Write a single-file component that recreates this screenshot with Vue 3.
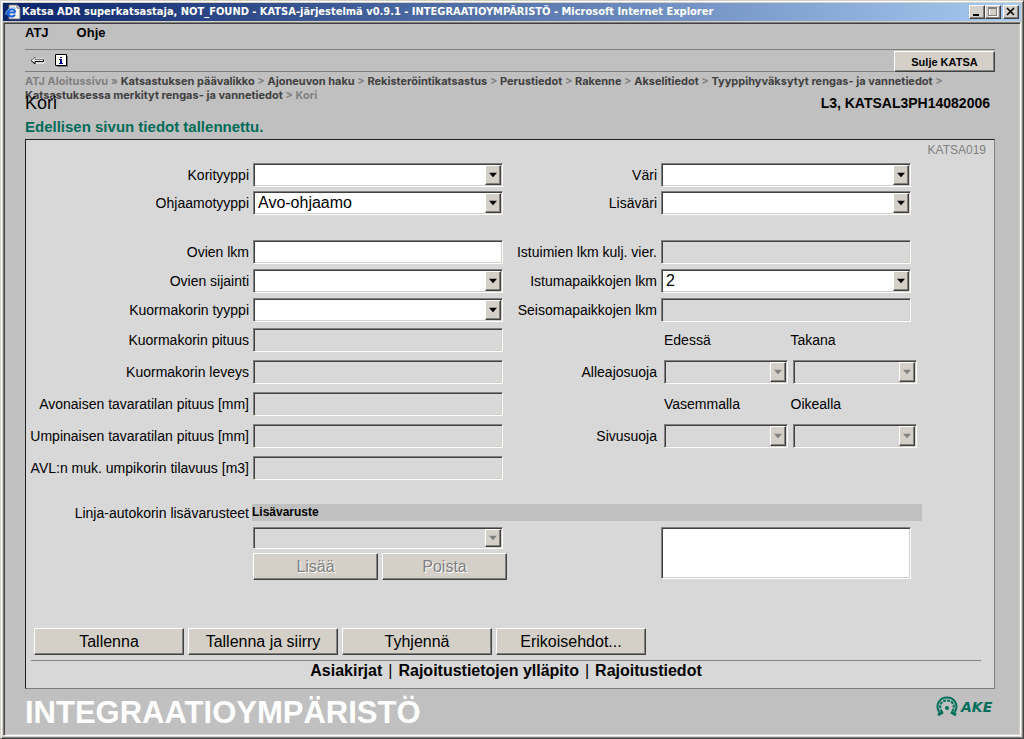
<script setup>
import { reactive } from 'vue'

const trail = [
  'Katsastuksen päävalikko',
  'Ajoneuvon haku',
  'Rekisteröintikatsastus',
  'Perustiedot',
  'Rakenne',
  'Akselitiedot',
  'Tyyppihyväksytyt rengas- ja vannetiedot',
  'Katsastuksessa merkityt rengas- ja vannetiedot',
]

const sel = (id, label, value = '') => ({ id, label, kind: 'select', value })
const txt = (id, label, disabled = true) => ({ id, label, kind: 'text', value: '', disabled })
const heads = (...names) => ({ kind: 'heads', names })
const pair = (id, label, parts) => ({ id, label, kind: 'pair', parts })

const rows = reactive([
  { size: 'tight', cells: [sel('korityyppi', 'Korityyppi'), sel('vari', 'Väri')] },
  { size: 'tight last', cells: [sel('ohjaamo', 'Ohjaamotyyppi', 'Avo-ohjaamo'), sel('lisavari', 'Lisäväri')] },
  { size: 'mid', cells: [txt('ovet', 'Ovien lkm', false), txt('istuimet', 'Istuimien lkm kulj. vier.')] },
  { size: 'mid', cells: [sel('sijainti', 'Ovien sijainti'), sel('istumapaikat', 'Istumapaikkojen lkm', '2')] },
  { size: 'mid', cells: [sel('kuormatyyppi', 'Kuormakorin tyyppi'), txt('seisomapaikat', 'Seisomapaikkojen lkm')] },
  { size: 'loose', cells: [txt('pituus', 'Kuormakorin pituus'), heads('Edessä', 'Takana')] },
  { size: 'loose', cells: [txt('leveys', 'Kuormakorin leveys'), pair('alleajo', 'Alleajosuoja', ['Edessä', 'Takana'])] },
  { size: 'loose', cells: [txt('avonainen', 'Avonaisen tavaratilan pituus [mm]'), heads('Vasemmalla', 'Oikealla')] },
  { size: 'loose', cells: [txt('umpinainen', 'Umpinaisen tavaratilan pituus [mm]'), pair('sivu', 'Sivusuoja', ['Vasemmalla', 'Oikealla'])] },
  { size: 'loose', cells: [txt('tilavuus', 'AVL:n muk. umpikorin tilavuus [m3]')] },
])

const actions = ['Tallenna', 'Tallenna ja siirry', 'Tyhjennä', 'Erikoisehdot...']
</script>

<template>
  <div class="window">
    <header class="titlebar">
      <svg class="ie" viewBox="0 0 16 16" aria-hidden="true">
        <path d="M4 1h8l3 3v11H4z" fill="#f4f4ec" stroke="#777" />
        <path d="M12 1v3h3" fill="#fff" stroke="#777" />
        <path d="M10.500 8.500H3.500M10 10.500C8 14 2.500 12.500 3 8.500S9.500 4 10.200 8.300" fill="none" stroke="#1b62d8" stroke-width="2" />
        <path d="M1 11C0 6 7 2 11 4.500" fill="none" stroke="#7db7ff" />
      </svg>
      <span class="caption">Katsa ADR superkatsastaja, NOT_FOUND - KATSA-järjestelmä v0.9.1 - INTEGRAATIOYMPÄRISTÖ - Microsoft Internet Explorer</span>
      <div class="controls">
        <button type="button" aria-label="Minimize"><svg viewBox="0 0 12 10"><path d="M2 7h6v2H2z" /></svg></button>
        <button type="button" aria-label="Maximize" disabled><svg viewBox="0 0 12 10"><path d="M2 1h8v8H2z" fill="none" stroke="#fff" transform="translate(.5 .5)" /><path d="M1 0h9v9H1zM2 2v6h7V2z" fill="#808080" fill-rule="evenodd" /></svg></button>
        <button type="button" class="close" aria-label="Close"><svg viewBox="0 0 12 10"><path d="M2 1l7 7M9 1L2 8" stroke="#000" stroke-width="1.600" /></svg></button>
      </div>
    </header>

    <main class="client">
      <nav class="menu">
        <a href="#atj">ATJ</a>
        <a href="#ohje">Ohje</a>
      </nav>
      <div class="toolbar">
        <button type="button" class="tool" aria-label="Takaisin">
          <svg viewBox="0 0 15 10" class="back">
            <path d="M6 2v1h8M6 8V7h8V4" fill="none" stroke="#f5f5f5" />
            <path d="M1 4.500L5 1v2.500h8v2H5V8z" fill="#e8e8e8" />
            <path d="M1 4.500L5 1v2.500h8" fill="none" stroke="#777" />
            <path d="M1 4.500L5 8V5.500h8.500v-2" fill="none" stroke="#000" />
          </svg>
        </button>
        <button type="button" class="tool" aria-label="Info">
          <svg viewBox="0 0 14 14" class="info">
            <path d="M2 2h11v11H2z" fill="#777" />
            <path d="M.5 .5h11v11H.5z" fill="#fff" stroke="#000" />
            <path d="M5 3h2v1H5zM4 5h3v4h1v1H4V9h1V6H4z" fill="#000080" />
          </svg>
        </button>
        <button type="button" class="btn quit">Sulje KATSA</button>
      </div>

      <nav class="crumbs">
        <span class="dim">ATJ Aloitussivu »</span>{{ ' ' }}
        <template v-for="t in trail" :key="t"><a href="#polku">{{ t }}</a><span class="sep"> &gt; </span></template>
        <span class="dim">Kori</span>
      </nav>
      <div class="heading">
        <h1>Kori</h1>
        <strong>L3, KATSAL3PH14082006</strong>
      </div>
      <p class="message">Edellisen sivun tiedot tallennettu.</p>

      <form class="panel" @submit.prevent>
        <div class="code">KATSA019</div>

        <div v-for="(row, i) in rows" :key="i" class="row" :class="row.size">
          <template v-for="(c, j) in row.cells" :key="j">
            <label v-if="c.kind === 'select' || c.kind === 'text'" :for="c.id" class="label">{{ c.label }}</label>
            <span v-else class="label">{{ c.label }}</span>

            <span v-if="c.kind === 'select'" class="combo">
              <select :id="c.id" v-model="c.value"><option>{{ c.value }}</option></select>
              <svg class="arrow" viewBox="0 0 7 4"><path d="M0 0h7L3.500 4z" /></svg>
            </span>
            <input v-else-if="c.kind === 'text'" :id="c.id" v-model="c.value" type="text" class="field" :disabled="c.disabled" />
            <div v-else-if="c.kind === 'heads'" class="heads">
              <span v-for="n in c.names" :key="n">{{ n }}</span>
            </div>
            <div v-else class="pair">
              <span v-for="p in c.parts" :key="p" class="combo off">
                <select disabled :aria-label="c.label + ' ' + p"><option></option></select>
                <svg class="arrow" viewBox="0 0 7 4"><path d="M0 0h7L3.500 4z" /></svg>
              </span>
            </div>
          </template>
        </div>

        <div class="row extras">
          <label for="varuste" class="label">Linja-autokorin lisävarusteet</label>
          <div class="band">Lisävaruste</div>
          <div class="add">
            <span class="combo off">
              <select id="varuste" disabled><option></option></select>
              <svg class="arrow" viewBox="0 0 7 4"><path d="M0 0h7L3.500 4z" /></svg>
            </span>
            <div class="buttons">
              <button type="button" class="btn small" disabled>Lisää</button>
              <button type="button" class="btn small" disabled>Poista</button>
            </div>
          </div>
          <textarea class="field list" aria-label="Valitut lisävarusteet"></textarea>
        </div>

        <div class="buttons actions">
          <button v-for="a in actions" :key="a" type="button" class="btn">{{ a }}</button>
        </div>
        <nav class="links">
          <a href="#asiakirjat">Asiakirjat</a><span>|</span>
          <a href="#yllapito">Rajoitustietojen ylläpito</a><span>|</span>
          <a href="#rajoitustiedot">Rajoitustiedot</a>
        </nav>
      </form>

      <footer class="footer">
        <span class="env">INTEGRAATIOYMPÄRISTÖ</span>
        <svg class="logo" viewBox="0 0 60 24" aria-label="AKE">
          <path d="M5 18.500C-1 10 5 2.500 12 2.500S25 10 19 18.500" fill="none" stroke="#00705c" stroke-width="2" />
          <path d="M7 17C2.500 10 7 5.500 12 5.500S21.500 10 17 17" fill="none" stroke="#00705c" stroke-width="2" stroke-dasharray="3 1" />
          <path d="M3 20l5-3M21 20l-5-3" stroke="#00705c" stroke-width="3" />
          <circle cx="12" cy="13" r="2" fill="#00705c" />
          <text x="26" y="17" class="logo-text">AKE</text>
        </svg>
      </footer>
    </main>
  </div>
</template>

<style>
body {
  margin: 0;
  background: #d4d0c8;
}
</style>

<style scoped>
* {
  box-sizing: border-box;
}

.window {
  display: flex;
  flex-direction: column;
  min-height: 100vh;
  padding: 2px;
  border: 1px solid;
  border-color: #d4d0c8 #404040 #404040 #d4d0c8;
  background: #d4d0c8;
  box-shadow: inset 1px 1px #fff, inset -1px -1px #808080;
  font-family: "Liberation Sans", Arial, sans-serif;
  font-size: 14px;
  color: #000;
}

a {
  color: inherit;
  text-decoration: none;
}

.titlebar {
  display: flex;
  align-items: center;
  height: 18px;
  margin-bottom: 1px;
  padding: 0 2px;
  background: linear-gradient(90deg, #0a246a, #a6caf0);
}

.ie {
  width: 16px;
  height: 16px;
  margin-right: 1px;
}

.caption {
  flex: 1;
  overflow: hidden;
  color: #fff;
  font: bold 11px/16px "DejaVu Sans Condensed", "DejaVu Sans", sans-serif;
  white-space: nowrap;
}

.controls {
  display: flex;
}

.controls button {
  width: 16px;
  height: 14px;
  padding: 0;
  border: 1px solid;
  border-color: #fff #404040 #404040 #fff;
  background: #d4d0c8;
  box-shadow: inset -1px -1px #808080;
}

.controls svg {
  display: block;
  width: 12px;
  height: 10px;
  margin: 1px;
}

.controls .close {
  margin-left: 2px;
}

.client {
  flex: 1;
  padding: 2px 25px 0 21px;
  border: 1px solid;
  border-color: #808080 #fff #fff #808080;
  background: #c0c0c0;
  box-shadow: inset 1px 1px #404040, inset -1px -1px #d4d0c8;
}

.menu {
  display: flex;
  gap: 28px;
  height: 24px;
  font-weight: bold;
  font-size: 13px;
  line-height: 16px;
}

.toolbar {
  display: flex;
  align-items: center;
  gap: 10px;
  height: 23px;
  padding-left: 5px;
  border: 1px solid #808080;
  border-width: 1px 0;
}

.tool {
  padding: 0;
  border: 0;
  background: none;
}

.tool svg {
  display: block;
}

.back {
  width: 15px;
  height: 10px;
}

.info {
  width: 14px;
  height: 14px;
}

.btn {
  height: 27px;
  padding: 0;
  border: 1px solid;
  border-color: #fff #404040 #404040 #fff;
  background: #d4d0c8;
  box-shadow: inset -1px -1px #808080;
  color: #000;
  font: 16px/20px "Liberation Sans", Arial, sans-serif;
}

.btn:disabled {
  color: #808080;
  text-shadow: 1px 1px #fff;
}

.quit {
  align-self: flex-end;
  width: 101px;
  height: 21px;
  margin: 0 0 -1px auto;
  font-weight: bold;
  font-size: 11px;
  line-height: 16px;
}

.crumbs {
  padding-top: 2px;
  color: #404040;
  font-family: Inter, "Liberation Sans", sans-serif;
  font-weight: bold;
  font-size: 11px;
  line-height: 14px;
}

.dim,
.sep {
  color: #808080;
}

.heading {
  display: flex;
  justify-content: space-between;
  align-items: center;
  margin-top: -9px;
  padding-right: 5px;
  line-height: 20px;
}

h1 {
  margin: 0;
  font-weight: normal;
  font-size: 18px;
}

.message {
  margin: 5px 0 3px;
  color: #006c59;
  font-weight: bold;
  font-size: 15px;
  line-height: 18px;
}

.panel {
  border: 1px solid #808080;
  border-color: #202020 #808080 #808080 #202020;
  background: #d8d8d8;
}

.code {
  height: 21px;
  padding: 2px 8px 0;
  color: #808080;
  font-size: 12px;
  line-height: 16px;
  text-align: right;
}

.row {
  display: grid;
  grid-template-columns: 223px 1fr 150px 1fr;
  align-items: start;
  column-gap: 4px;
  padding: 2px 83px 0 0;
}

.tight {
  height: 28px;
}

.last {
  margin-bottom: 21px;
}

.mid {
  height: 29px;
}

.loose {
  height: 32px;
  padding-top: 3px;
}

.label,
.heads {
  line-height: 24px;
  text-align: right;
  white-space: nowrap;
}

.field,
.combo select {
  display: block;
  width: 100%;
  min-width: 0;
  height: 24px;
  margin: 0;
  padding: 0 4px;
  border: 1px solid;
  border-color: #808080 #fff #fff #808080;
  border-radius: 0;
  outline: 0;
  appearance: none;
  background: #fff;
  box-shadow: inset 1px 1px #404040, inset -1px -1px #d4d0c8;
  color: #000;
  font: 16px/20px "Liberation Sans", Arial, sans-serif;
  opacity: 1;
}

.field:disabled,
.off select {
  background: #d8d8d8;
}

.combo {
  position: relative;
  display: block;
  min-width: 0;
}

.arrow {
  position: absolute;
  top: 2px;
  right: 2px;
  width: 16px;
  height: calc(100% - 4px);
  padding: 0 3px;
  border: 1px solid;
  border-color: #fff #404040 #404040 #fff;
  background: #d4d0c8;
  box-shadow: inset -1px -1px #808080;
  pointer-events: none;
}

.off .arrow {
  fill: #808080;
}

.heads,
.pair {
  display: grid;
  grid-template-columns: 1fr 1fr;
  gap: 5px;
  margin: 0 -6px 0 3px;
  text-align: left;
}

.heads {
  gap: 0;
}

.extras {
  row-gap: 5px;
  padding-top: 19px;
}

.extras .label {
  line-height: 18px;
}

.band {
  grid-column: 2 / -1;
  margin: 0 -11px 0 -1px;
  background: #c0c0c0;
  font-weight: bold;
  font-size: 12px;
  line-height: 17px;
}

.add {
  grid-column: 2;
  min-width: 0;
}

.add select {
  height: 22px;
}

.buttons {
  display: flex;
  gap: 4px;
}

.add .buttons {
  margin-top: 4px;
}

.btn.small {
  flex: 0 0 125px;
}

.list {
  grid-column: 4;
  height: 52px;
  resize: none;
}

.actions {
  margin-top: 48px;
  padding-left: 8px;
}

.actions .btn {
  width: 150px;
}

.links {
  display: flex;
  justify-content: center;
  gap: 6px;
  margin: 5px 13px 0 5px;
  border-top: 1px solid #808080;
  padding-bottom: 7px;
  font-weight: bold;
  font-size: 16px;
  line-height: 20px;
}

.links span {
  font-weight: normal;
}

.footer {
  display: flex;
  justify-content: space-between;
  align-items: center;
  padding-top: 6px;
}

.env {
  color: #fff;
  font-weight: bold;
  font-size: 31px;
  line-height: 36px;
}

.logo {
  width: 60px;
  height: 24px;
  margin-bottom: 12px;
}

.logo-text {
  fill: #00705c;
  font: italic bold 14px "DejaVu Sans", sans-serif;
}
</style>
